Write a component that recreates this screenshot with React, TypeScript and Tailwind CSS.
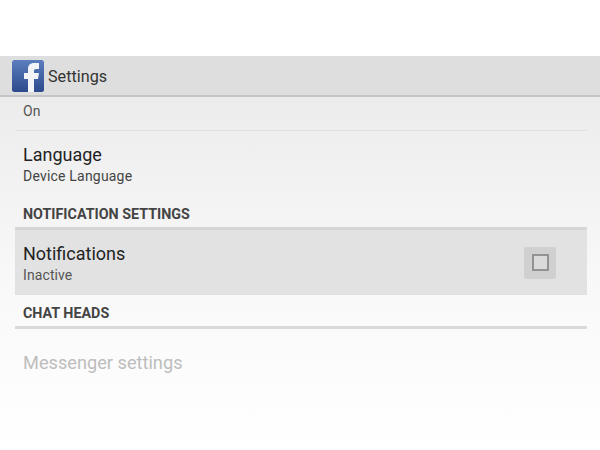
export default function App() {
  return (
    <div className="w-[600px] h-[450px] bg-white overflow-hidden font-['Roboto',sans-serif] flex flex-col">
      <div className="h-[56px] shrink-0 bg-white" />
      {/* action bar */}
      <div className="h-[41px] shrink-0 flex items-center bg-[#dedede] border-b-2 border-[#c4c4c4] pl-3">
        <svg width="32" height="32" viewBox="0 0 32 32" className="shrink-0 mt-[1px]">
          <defs>
            <linearGradient id="fb" x1="0" y1="0" x2="0" y2="1">
              <stop offset="0" stopColor="#5b7fbe" />
              <stop offset="1" stopColor="#2c4a8c" />
            </linearGradient>
          </defs>
          <rect width="32" height="32" rx="2.5" fill="url(#fb)" />
          <path d="M16 32V19h-4v-6h4V9c0-4 2.5-6 6-6h5v6h-3c-1.5 0-2 .7-2 2v2h5l-1 6h-4v13z" fill="#f2f4f8" />
        </svg>
        <span className="ml-1 mt-[3px] text-[16.2px] text-[#333]">Settings</span>
      </div>
      {/* settings list */}
      <div className="flex-1 bg-gradient-to-b from-[#ececec] via-[#f8f8f8] via-50% to-white px-[15px] pr-[13px]">
        <div className="h-[34px] pl-2 pt-[5px] border-b border-[#e0e0e0] text-[14px] leading-[18px] text-[#555]">On</div>
        <div className="h-[64px] pl-2 pt-[13px]">
          <div className="text-[18px] leading-[22px] text-[#222]">Language</div>
          <div className="text-[14px] leading-[21px] tracking-[0.2px] text-[#444]">Device Language</div>
        </div>
        <div className="h-[35px] pl-2 pt-[10px] border-b-[3px] border-[#d6d6d6] text-[14.3px] leading-[18px] font-bold text-[#444]">NOTIFICATION SETTINGS</div>
        <div className="h-[65px] pl-2 pr-[31px] bg-[#e2e2e2] flex items-center justify-between">
          <div className="mt-[1px]">
            <div className="text-[18px] leading-[22px] pt-[2px] text-[#222]">Notifications</div>
            <div className="text-[14px] leading-[20px] tracking-[0.1px] text-[#555]">Inactive</div>
          </div>
          <div className="w-8 h-8 bg-[#d0d0d0] rounded-[2px] flex items-center justify-center">
            <div className="w-[17px] h-[17px] border-2 border-[#929292] bg-[#dadada]" />
          </div>
        </div>
        <div className="h-[34px] pl-2 pt-[9px] border-b-[3px] border-[#dadada] text-[14.3px] leading-[18px] font-bold text-[#444]">CHAT HEADS</div>
        <div className="pl-2 pt-[23px] text-[18.2px] leading-[22px] text-[#bdbdbd]">Messenger settings</div>
      </div>
    </div>
  );
}
